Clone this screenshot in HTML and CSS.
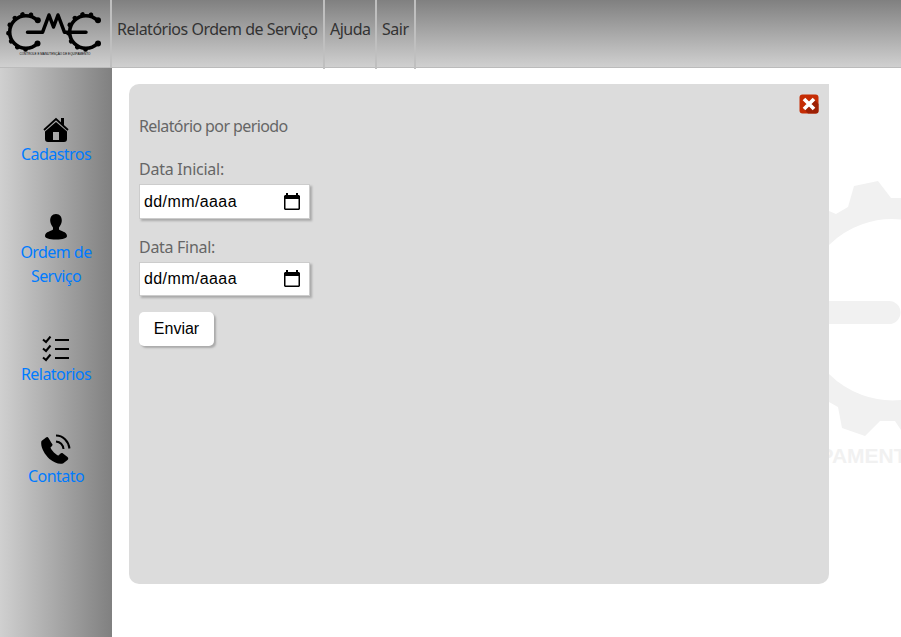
FILE: index.html
```html
<!DOCTYPE html>
<html lang="pt-BR">
<head>
<meta charset="utf-8">
<title>CME</title>
<link rel="stylesheet" href="styles.css">
</head>
<body>
<header class="topbar">
  <a class="brand">
    <svg width="110" height="67" viewBox="0 0 110 67">
      <g fill="none" stroke="#000">
        <path d="M37.500 20.500A16.300 16.300 0 1 0 37.500 43.500M97.500 20.500A16.300 16.300 0 1 0 97.500 43.500" stroke-width="3.600"/>
        <path d="M31 14.800A17.700 17.700 0 1 0 31 48.800M91 14.800A17.700 17.700 0 1 0 91 48.800" stroke-width="4.600" stroke-linecap="round" stroke-dasharray="0.100 8.400"/>
        <path d="M27.500 32.300H42.500L49 15L53.500 27L58 15L64.500 32.300H86" stroke-width="3.500" stroke-linecap="round" stroke-linejoin="round"/>
      </g>
      <g><circle cx="37.800" cy="20.300" r="3"/><circle cx="37.500" cy="43.500" r="3"/><circle cx="98" cy="20.300" r="3"/><circle cx="98" cy="43.500" r="3"/></g>
      <text x="19.500" y="54.500" textLength="71" lengthAdjust="spacingAndGlyphs" class="logo-caption">CONTROLE E MANUTENÇÃO DE EQUIPAMENTO</text>
    </svg>
  </a>
  <nav class="menu">
    <a class="m-report">Relatórios Ordem de Serviço</a>
    <a class="m-help">Ajuda</a>
    <a class="m-exit">Sair</a>
  </nav>
</header>
<div class="layout">
  <aside class="sidebar">
    <a class="item home">
      <svg width="28" height="26" viewBox="0 0 28 26"><path fill-rule="evenodd" d="M3 15.500L14 6L25 15.500V23Q25 26 22 26H6Q3 26 3 23ZM11 16V24H17V16Z"/><path d="M2 14L14 3L26 14" fill="none" stroke="#000" stroke-width="1.800"/><path d="M19 2H22V11L19 8Z"/></svg>
      <span>Cadastros</span>
    </a>
    <a class="item user">
      <svg width="24" height="27" viewBox="0 0 24 27"><path d="M12 1C8 1 6 4 6.200 8C6.400 11 8 13 9 14.500V16.500C8 18 1 18.500 1 23C1 25 5 26.500 12 26.500S23 25 23 23C23 18.500 16 18 15 16.500V14.500C16 13 17.600 11 17.800 8C18 4 16 1 12 1Z"/></svg>
      <span>Ordem de Serviço</span>
    </a>
    <a class="item list">
      <svg width="28" height="26" viewBox="0 0 28 26"><path d="M1 3.500L4 6L8.500 .5M1 12.500L4 15L8.500 9.500M1 21.500L4 24L8.500 18.500M13 4H27M13 13H27M13 22H27" fill="none" stroke="#000" stroke-width="2"/></svg>
      <span>Relatorios</span>
    </a>
    <a class="item phone">
      <svg width="32" height="31" viewBox="0 0 32 31"><g transform="translate(0 1)"><path d="M6 3.500L1.500 7C0 12 4 20 9.500 25C14.500 29 19 30.500 23 29.500L27.500 26C28.500 25 28.500 24 27.500 23L23 19.500C22 18.700 21 19 20 20L18.500 21.500C17 22 11 16 10.500 13.500L12 12C13 11 12.500 10 11.500 9L8.500 4Q7.500 2.500 6 3.500Z"/><path d="M16 1.500C23 1.500 28.500 7 29.500 14.500M16 7.500C20 8 23 11 23.500 15" fill="none" stroke="#000" stroke-width="2"/></g></svg>
      <span>Contato</span>
    </a>
  </aside>
  <main class="content">
    <svg class="watermark" width="72" height="300" viewBox="829 170 72 300">
      <g fill="#f1f1f1">
        <path fill-rule="evenodd" d="M829 211L836 214L848 207L854 186L878 181L891 198H901V421H895L880 421L865 436L842 428L838 407L829 402ZM901 219.500A90.500 90.500 0 0 0 829 245V374A90.500 90.500 0 0 0 901 400Z"/>
        <path d="M829 301H889A11.500 11.500 0 0 1 889 324H829ZM895 421H901V430Z"/>
      </g>
      <text x="819.500" y="463" class="watermark-text">PAMENTO</text>
    </svg>
    <section class="panel">
      <a class="close"><svg width="20" height="20" viewBox="0 0 20 20"><rect x=".5" y=".5" width="19" height="19" rx="3" fill="#c52c04"/><path d="M15 5L19.500 10V17Q19.500 19.500 17 19.500H9L5 15Z" fill="#9c2004"/><path d="M5 5L15 15M15 5L5 15" stroke="#fff" stroke-width="3.700"/></svg></a>
      <form>
        <p class="title">Relatório por periodo</p>
        <label class="initial">Data Inicial:</label>
        <div class="date"><span>dd/mm/aaaa</span><svg width="16" height="18" viewBox="0 0 16 18"><path fill-rule="evenodd" d="M2 0H4V2H12V0H14V2H15L16 3V16L15 17H1L0 16V3L1 2H2ZM1.500 6V15.500H14.500V6Z"/></svg></div>
        <label class="final">Data Final:</label>
        <div class="date second"><span>dd/mm/aaaa</span><svg width="16" height="18" viewBox="0 0 16 18"><path fill-rule="evenodd" d="M2 0H4V2H12V0H14V2H15L16 3V16L15 17H1L0 16V3L1 2H2ZM1.500 6V15.500H14.500V6Z"/></svg></div>
        <button type="button">Enviar</button>
      </form>
    </section>
  </main>
</div>
</body>
</html>
```
FILE: styles.css
```css
* { box-sizing: border-box; }
body {
  margin: 0;
  height: 637px;
  overflow: hidden;
  background: #fff;
  font: 16px/24px "Noto Sans", sans-serif;
  letter-spacing: -0.49px;
  color: #666;
}
svg { display: block; flex: none; }
.topbar {
  display: flex;
  height: 68px;
  background: linear-gradient(#808080, #d0d0d0);
  border-bottom: 1px solid #bbb;
}
.brand { width: 112px; height: 67px; border-right: 2px solid #bfbfbf; }
.logo-caption { font: 3.6px "Liberation Sans", sans-serif; letter-spacing: 0; }
.menu { display: flex; height: 69px; color: #333; white-space: nowrap; }
.menu a { padding: 17px 0 0 5px; border-right: 2px solid #bfbfbf; }
.m-report { width: 213px; }
.m-help { width: 52px; }
.m-exit { width: 39px; }
.layout { display: flex; height: 569px; }
.sidebar {
  width: 112px;
  padding-top: 48px;
  background: linear-gradient(to right, #d0d0d0, #808080);
  color: #007bff;
}
.item { display: flex; flex-direction: column; align-items: center; text-align: center; }
.item span { width: 90px; letter-spacing: -0.55px; }
.user { margin-top: 47px; }
.list { margin-top: 48px; }
.phone { margin-top: 47px; }
.content { flex: 1; position: relative; padding: 16px 0 0 17px; }
.watermark { position: absolute; right: 0; top: 102px; }
.watermark-text { font: bold 21px "Liberation Sans", sans-serif; fill: #f1f1f1; letter-spacing: 0; }
.panel {
  position: relative;
  width: 700px;
  height: 500px;
  padding: 30px 10px;
  background: #dcdcdc;
  border-radius: 10px 0 10px 10px;
}
.close { position: absolute; right: 10px; top: 10px; }
.title { margin: 0 0 19px; letter-spacing: -0.6px; }
label { display: block; margin-bottom: 3px; }
.initial { letter-spacing: -0.25px; }
.final { letter-spacing: -0.3px; }
.date {
  display: flex;
  align-items: center;
  justify-content: space-between;
  width: 171px;
  height: 35px;
  margin-bottom: 16px;
  padding: 0 9px 0 4px;
  border: 1px solid #ccc;
  background: #fff;
  box-shadow: 2px 2px 2px #aaa;
  font: 16px "Liberation Sans", sans-serif;
  letter-spacing: 0.4px;
  color: #000;
}
.second { height: 34px; }
button {
  display: block;
  width: 75px;
  height: 34px;
  padding: 0;
  border: 0;
  border-radius: 5px;
  background: #fff;
  box-shadow: 2px 2px 2px #aaa;
  font: 16px "Liberation Sans", sans-serif;
  color: #000;
}
```
